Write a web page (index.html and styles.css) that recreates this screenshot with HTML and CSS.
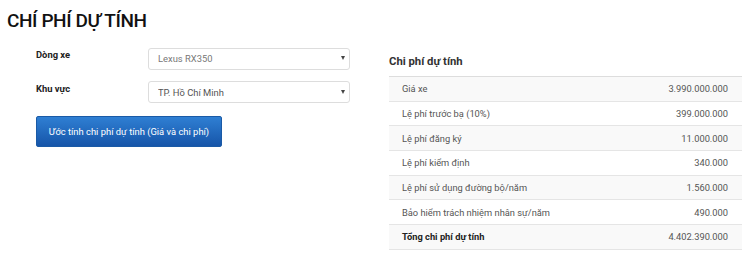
FILE: index.html
```html
<!DOCTYPE html>
<html lang="vi">
<head>
    <meta charset="UTF-8">
    <meta name="viewport" content="width=device-width, initial-scale=1.0">
    <title>Chi phí dự tính</title>
    <link rel="stylesheet" href="styles.css">
</head>
<body>

<h1 class="page-title">CHÍ PHÍ DỰ TÍNH</h1>

<div class="content">
    <div class="estimate-form">
        <div class="form-row">
            <label for="carModel">Dòng xe</label>
            <div class="select-wrap">
                <select id="carModel" class="muted">
                    <option>Lexus RX350</option>
                </select>
            </div>
        </div>
        <div class="form-row">
            <label for="region">Khu vực</label>
            <div class="select-wrap">
                <select id="region">
                    <option>TP. Hồ Chí Minh</option>
                </select>
            </div>
        </div>
        <button class="estimate-button">Ước tính chi phí dự tính (Giá và chi phí)</button>
    </div>

    <div class="cost-box">
        <h3>Chi phí dự tính</h3>
        <table class="cost-table">
            <tbody>
                <tr><td>Giá xe</td><td>3.990.000.000</td></tr>
                <tr><td>Lệ phí trước bạ (10%)</td><td>399.000.000</td></tr>
                <tr><td>Lệ phí đăng ký</td><td>11.000.000</td></tr>
                <tr><td>Lệ phí kiểm định</td><td>340.000</td></tr>
                <tr><td>Lệ phí sử dụng đường bộ/năm</td><td>1.560.000</td></tr>
                <tr><td>Bảo hiểm trách nhiệm nhân sự/năm</td><td>490.000</td></tr>
                <tr class="total"><td>Tổng chi phí dự tính</td><td>4.402.390.000</td></tr>
            </tbody>
        </table>
    </div>
</div>

</body>
</html>
```

FILE: styles.css
```css
body {
    margin: 0;
    padding: 0 8px;
    font-family: Roboto, "Liberation Sans", Arial, sans-serif;
    color: #333;
    background-color: #fff;
}
.page-title {
    margin: 9px 0 0 -1px;
    font-size: 19px;
    line-height: 24px;
    font-weight: 500;
    letter-spacing: -0.4px;
    color: #111;
}
.content {
    display: grid;
    grid-template-columns: 1fr 353px;
    column-gap: 39px;
    margin-top: 14px;
}
.estimate-form {
    padding-left: 28px;
}
.form-row {
    display: grid;
    grid-template-columns: 112px 202px;
    margin-bottom: 11px;
}
.form-row label {
    font-size: 9.4px;
    font-weight: 700;
    line-height: 14px;
    padding-top: 1px;
    color: #222;
}
.select-wrap {
    position: relative;
}
.select-wrap::after {
    content: "";
    position: absolute;
    right: 5px;
    top: 9px;
    border-left: 2px solid transparent;
    border-right: 2px solid transparent;
    border-top: 4px solid #444;
    pointer-events: none;
}
.select-wrap select {
    appearance: none;
    -webkit-appearance: none;
    width: 100%;
    height: 22px;
    box-sizing: border-box;
    padding: 0 9px;
    border: 1px solid #ddd;
    border-radius: 3px;
    background: #fff;
    font-family: inherit;
    font-size: 9.4px;
    color: #555;
    outline: none;
}
.select-wrap select.muted {
    color: #777;
}
.estimate-button {
    margin-top: 2px;
    width: 186px;
    height: 31px;
    padding: 0;
    white-space: nowrap;
    border: 1px solid #1a5aa6;
    border-radius: 2px;
    background: linear-gradient(#2f7fd3, #1655a9);
    color: #fff;
    font-family: inherit;
    font-size: 9.4px;
    cursor: pointer;
}
.cost-box h3 {
    margin: 7px 0 7px;
    font-size: 11.3px;
    line-height: 15px;
    font-weight: 700;
    color: #333;
}
.cost-table {
    width: 100%;
    border-collapse: collapse;
    border-top: 1px solid #ddd;
    font-size: 9.3px;
    color: #555;
}
.cost-table td {
    height: 23.7px;
    padding: 0 14px 0 13px;
    border-bottom: 1px solid #e5e5e5;
}
.cost-table td:last-child {
    text-align: right;
}
.cost-table tr:nth-child(odd) {
    background-color: #f9f9f9;
}
.cost-table tr.total td:first-child {
    font-weight: 700;
    color: #222;
}
```
